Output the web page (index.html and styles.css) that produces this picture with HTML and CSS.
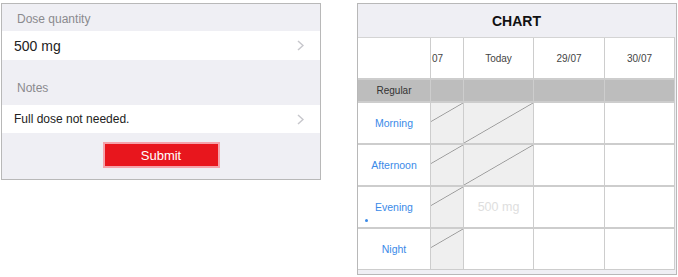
FILE: index.html
```html
<!DOCTYPE html>
<html lang="en">
<head>
    <meta charset="UTF-8">
    <meta name="viewport" content="width=device-width, initial-scale=1.0">
    <title>Dose chart</title>
    <link rel="stylesheet" href="styles.css">
</head>
<body>
    <div class="page">
        <div class="form">
            <div class="section-label">Dose quantity</div>
            <div class="row">
                <span class="row-value large">500 mg</span>
                <svg class="chevron" width="7" height="11" viewBox="0 0 7 11"><polyline points="1,1 6,5.5 1,10" fill="none" stroke="#c7c7cc" stroke-width="1.5"/></svg>
            </div>
            <div class="section-label notes">Notes</div>
            <div class="row">
                <span class="row-value">Full dose not needed.</span>
                <svg class="chevron" width="7" height="11" viewBox="0 0 7 11"><polyline points="1,1 6,5.5 1,10" fill="none" stroke="#c7c7cc" stroke-width="1.5"/></svg>
            </div>
            <div class="form-footer">
                <button class="submit">Submit</button>
            </div>
        </div>

        <div class="chart">
            <div class="chart-title">CHART</div>
            <div class="chart-grid">
                <!-- header row -->
                <div class="cell"></div>
                <div class="cell clipped">07</div>
                <div class="cell head">Today</div>
                <div class="cell head">29/07</div>
                <div class="cell head">30/07</div>

                <!-- regular -->
                <div class="cell group">Regular</div>
                <div class="cell group"></div>
                <div class="cell group"></div>
                <div class="cell group"></div>
                <div class="cell group"></div>

                <div class="cell slot">Morning</div>
                <div class="cell past partial"></div>
                <div class="cell past"></div>
                <div class="cell"></div>
                <div class="cell"></div>

                <div class="cell slot">Afternoon</div>
                <div class="cell past partial"></div>
                <div class="cell past"></div>
                <div class="cell"></div>
                <div class="cell"></div>

                <div class="cell slot">Evening<span class="dot"></span></div>
                <div class="cell past partial"></div>
                <div class="cell dose">500 mg</div>
                <div class="cell"></div>
                <div class="cell"></div>

                <div class="cell slot">Night</div>
                <div class="cell past partial"></div>
                <div class="cell"></div>
                <div class="cell"></div>
                <div class="cell"></div>
            </div>
        </div>
    </div>
</body>
</html>
```

FILE: styles.css
```css
body {
    margin: 0;
    background: #fff;
    font-family: "Liberation Sans", Arial, sans-serif;
}
.page {
    display: flex;
    align-items: flex-start;
    gap: 36px;
    padding: 3px 0 0 1px;
}

/* left form */
.form {
    width: 318px;
    border: 1px solid #b8b8b8;
    background: #efeff4;
}
.section-label {
    height: 27px;
    box-sizing: border-box;
    padding: 3px 0 0 15px;
    display: flex;
    align-items: center;
    font-size: 12px;
    color: #8a8a8e;
}
.section-label.notes {
    height: 45px;
    align-items: flex-end;
    padding: 0 0 10px 15px;
}
.row {
    height: 29px;
    background: #fff;
    display: flex;
    align-items: center;
    justify-content: space-between;
    padding: 0 16px 0 12px;
}
.row + .section-label + .row {
    height: 28px;
}
.row-value {
    font-size: 12px;
    color: #222;
}
.row-value.large {
    font-size: 14px;
}
.chevron {
    display: block;
}
.form-footer {
    height: 46px;
    box-sizing: border-box;
    padding-top: 9px;
    display: flex;
    justify-content: center;
    align-items: flex-start;
}
.submit {
    width: 117px;
    height: 26px;
    background: #e8161d;
    border: 2px solid #f5a3ab;
    color: #fff;
    font-family: inherit;
    font-size: 13px;
    padding: 0;
}

/* right chart */
.chart {
    width: 317px;
    border: 1px solid #b8b8b8;
    background: #efeff4;
    padding: 0 1px 4px 0;
}
.chart-title {
    height: 33px;
    display: flex;
    align-items: center;
    justify-content: center;
    font-size: 14px;
    font-weight: bold;
    color: #111;
}
.chart-grid {
    display: grid;
    grid-template-columns: 72px 32px 69px 70px 69px;
    grid-template-rows: 40px 21px 40px 40px 40px 40px;
    column-gap: 1px;
    row-gap: 2px;
    background: #cdcdcd;
    border-top: 1px solid #d4d4d4;
    border-right: 1px solid #cdcdcd;
    border-bottom: 1px solid #cdcdcd;
}
.cell {
    background: #fff;
    display: flex;
    align-items: center;
    justify-content: center;
    font-size: 10px;
    color: #444;
    position: relative;
}
.clipped {
    justify-content: flex-start;
    padding-left: 1px;
}
.group {
    background: #bdbdbd;
    color: #333;
}
.slot {
    color: #3a8ae8;
    font-size: 10.5px;
}
.dot {
    position: absolute;
    left: 7px;
    bottom: 5px;
    width: 3px;
    height: 3px;
    border-radius: 50%;
    background: #3a8ae8;
}
.past {
    background-color: #efefef;
    background-image: linear-gradient(to top left, transparent calc(50% - 0.8px), #9a9a9a 50%, transparent calc(50% + 0.8px));
    background-repeat: no-repeat;
}
.past.partial {
    background-size: 69px 100%;
    background-position: right top;
}
.dose {
    font-size: 12.5px;
    color: #dedede;
}
```
